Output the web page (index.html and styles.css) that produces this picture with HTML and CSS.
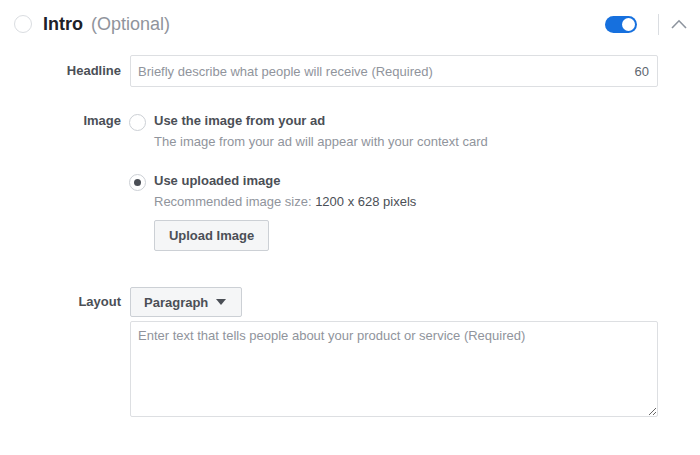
FILE: index.html
```html
<!DOCTYPE html>
<html>
<head>
<meta charset="utf-8">
<link rel="stylesheet" href="styles.css">
</head>
<body>
<div class="panel">
  <div class="header">
    <span class="radio radio-lg"></span>
    <span class="title">Intro</span>
    <span class="optional">(Optional)</span>
    <span class="spacer"></span>
    <span class="toggle"><span class="knob"></span></span>
    <span class="divider"></span>
    <svg class="chevron" width="16" height="10" viewBox="0 0 16 10"><polyline points="1,9 8,1.8 15,9" fill="none" stroke="#8d949e" stroke-width="1.6"/></svg>
  </div>

  <div class="form">
    <div class="row row-headline">
      <label class="label">Headline</label>
      <div class="field">
        <input class="field-input" type="text" placeholder="Briefly describe what people will receive (Required)">
        <span class="count">60</span>
      </div>
    </div>

    <div class="row row-image">
      <label class="label label-image">Image</label>
      <div class="options">
        <div class="option">
          <span class="radio"></span>
          <div class="option-text">
            <div class="option-title">Use the image from your ad</div>
            <div class="option-desc">The image from your ad will appear with your context card</div>
          </div>
        </div>
        <div class="option option-second">
          <span class="radio checked"></span>
          <div class="option-text">
            <div class="option-title">Use uploaded image</div>
            <div class="option-desc">Recommended image size: <span class="dark">1200 x 628 pixels</span></div>
            <button class="btn btn-upload">Upload Image</button>
          </div>
        </div>
      </div>
    </div>

    <div class="row row-layout">
      <label class="label label-layout">Layout</label>
      <div class="layout-body">
        <button class="btn btn-select">Paragraph <span class="caret"></span></button>
        <textarea class="textarea" placeholder="Enter text that tells people about your product or service (Required)"></textarea>
      </div>
    </div>
  </div>
</div>
</body>
</html>
```

FILE: styles.css
```css
* { box-sizing: border-box; }
html, body { margin: 0; padding: 0; background: #fff; }
body {
  font-family: "Liberation Sans", Arial, sans-serif;
  font-size: 13px;
  color: #1d2129;
  width: 700px;
  height: 455px;
  overflow: hidden;
}

.header {
  display: flex;
  align-items: center;
  height: 48px;
  padding: 0 0 0 14px;
}
.radio {
  display: flex;
  align-items: center;
  justify-content: center;
  width: 17px;
  height: 17px;
  border: 1px solid #ccd0d5;
  border-radius: 50%;
  flex: none;
  background: #fff;
}
.radio-lg { width: 18px; height: 18px; border-color: #dadde1; }
.radio.checked::after {
  content: "";
  width: 7px;
  height: 7px;
  border-radius: 50%;
  background: #4b4f56;
}
.title {
  font-size: 18px;
  font-weight: bold;
  color: #1d2129;
  margin-left: 11px;
}
.optional {
  font-size: 18px;
  color: #90949c;
  margin-left: 8px;
}
.spacer { flex: 1; }
.toggle {
  display: flex;
  justify-content: flex-end;
  align-items: center;
  width: 32px;
  height: 17px;
  padding: 2px;
  border-radius: 9px;
  background: #1670de;
}
.knob {
  width: 13px;
  height: 13px;
  border-radius: 50%;
  background: #fff;
}
.divider {
  width: 1px;
  height: 21px;
  background: #dadde1;
  margin-left: 21px;
}
.chevron { margin-left: 12px; margin-right: 13px; }

.form { padding-top: 7px; }
.row {
  display: grid;
  grid-template-columns: 121px 528px;
  column-gap: 9px;
}
.label {
  text-align: right;
  font-weight: bold;
  color: #4b4f56;
  line-height: 32px;
}
.field {
  display: flex;
  align-items: center;
  height: 32px;
  border: 1px solid #dddfe2;
  border-radius: 2px;
  padding: 0 8px 0 7px;
}
.field-input {
  flex: 1;
  border: none;
  outline: none;
  padding: 0;
  font-family: inherit;
  font-size: 13px;
  color: #1d2129;
  background: transparent;
}
.field-input::placeholder, .textarea::placeholder { color: #90949c; opacity: 1; }
.count { color: #606770; font-size: 13px; }

.row-image { margin-top: 24px; }
.label-image { line-height: 20px; }
.option { display: flex; gap: 8px; align-items: flex-start; }
.option .radio { margin-top: 3px; margin-left: -1px; }
.option-second { margin-top: 19px; }
.option-title { font-weight: bold; color: #4b4f56; line-height: 20px; }
.option-desc { color: #90949c; line-height: 20px; margin-top: 1px; }
.dark { color: #4b4f56; }

.btn {
  font-family: inherit;
  font-size: 13px;
  font-weight: bold;
  color: #4b4f56;
  background: #f5f6f7;
  border: 1px solid #ccd0d5;
  border-radius: 2px;
  cursor: pointer;
}
.btn-upload {
  margin-top: 8px;
  height: 31px;
  width: 115px;
  padding: 0;
}

.row-layout { margin-top: 36px; }
.label-layout { line-height: 29px; }
.layout-body { display: flex; flex-direction: column; align-items: flex-start; }
.btn-select {
  display: flex;
  align-items: center;
  height: 30px;
  width: 112px;
  padding: 0 0 0 13px;
  gap: 8px;
}
.caret {
  width: 0;
  height: 0;
  border-left: 5px solid transparent;
  border-right: 5px solid transparent;
  border-top: 6px solid #4b4f56;
}
.textarea {
  margin-top: 4px;
  width: 528px;
  height: 96px;
  border: 1px solid #dddfe2;
  border-radius: 2px;
  padding: 5px 7px;
  font-family: inherit;
  font-size: 13px;
  line-height: 17px;
  color: #1d2129;
  outline: none;
}
```
